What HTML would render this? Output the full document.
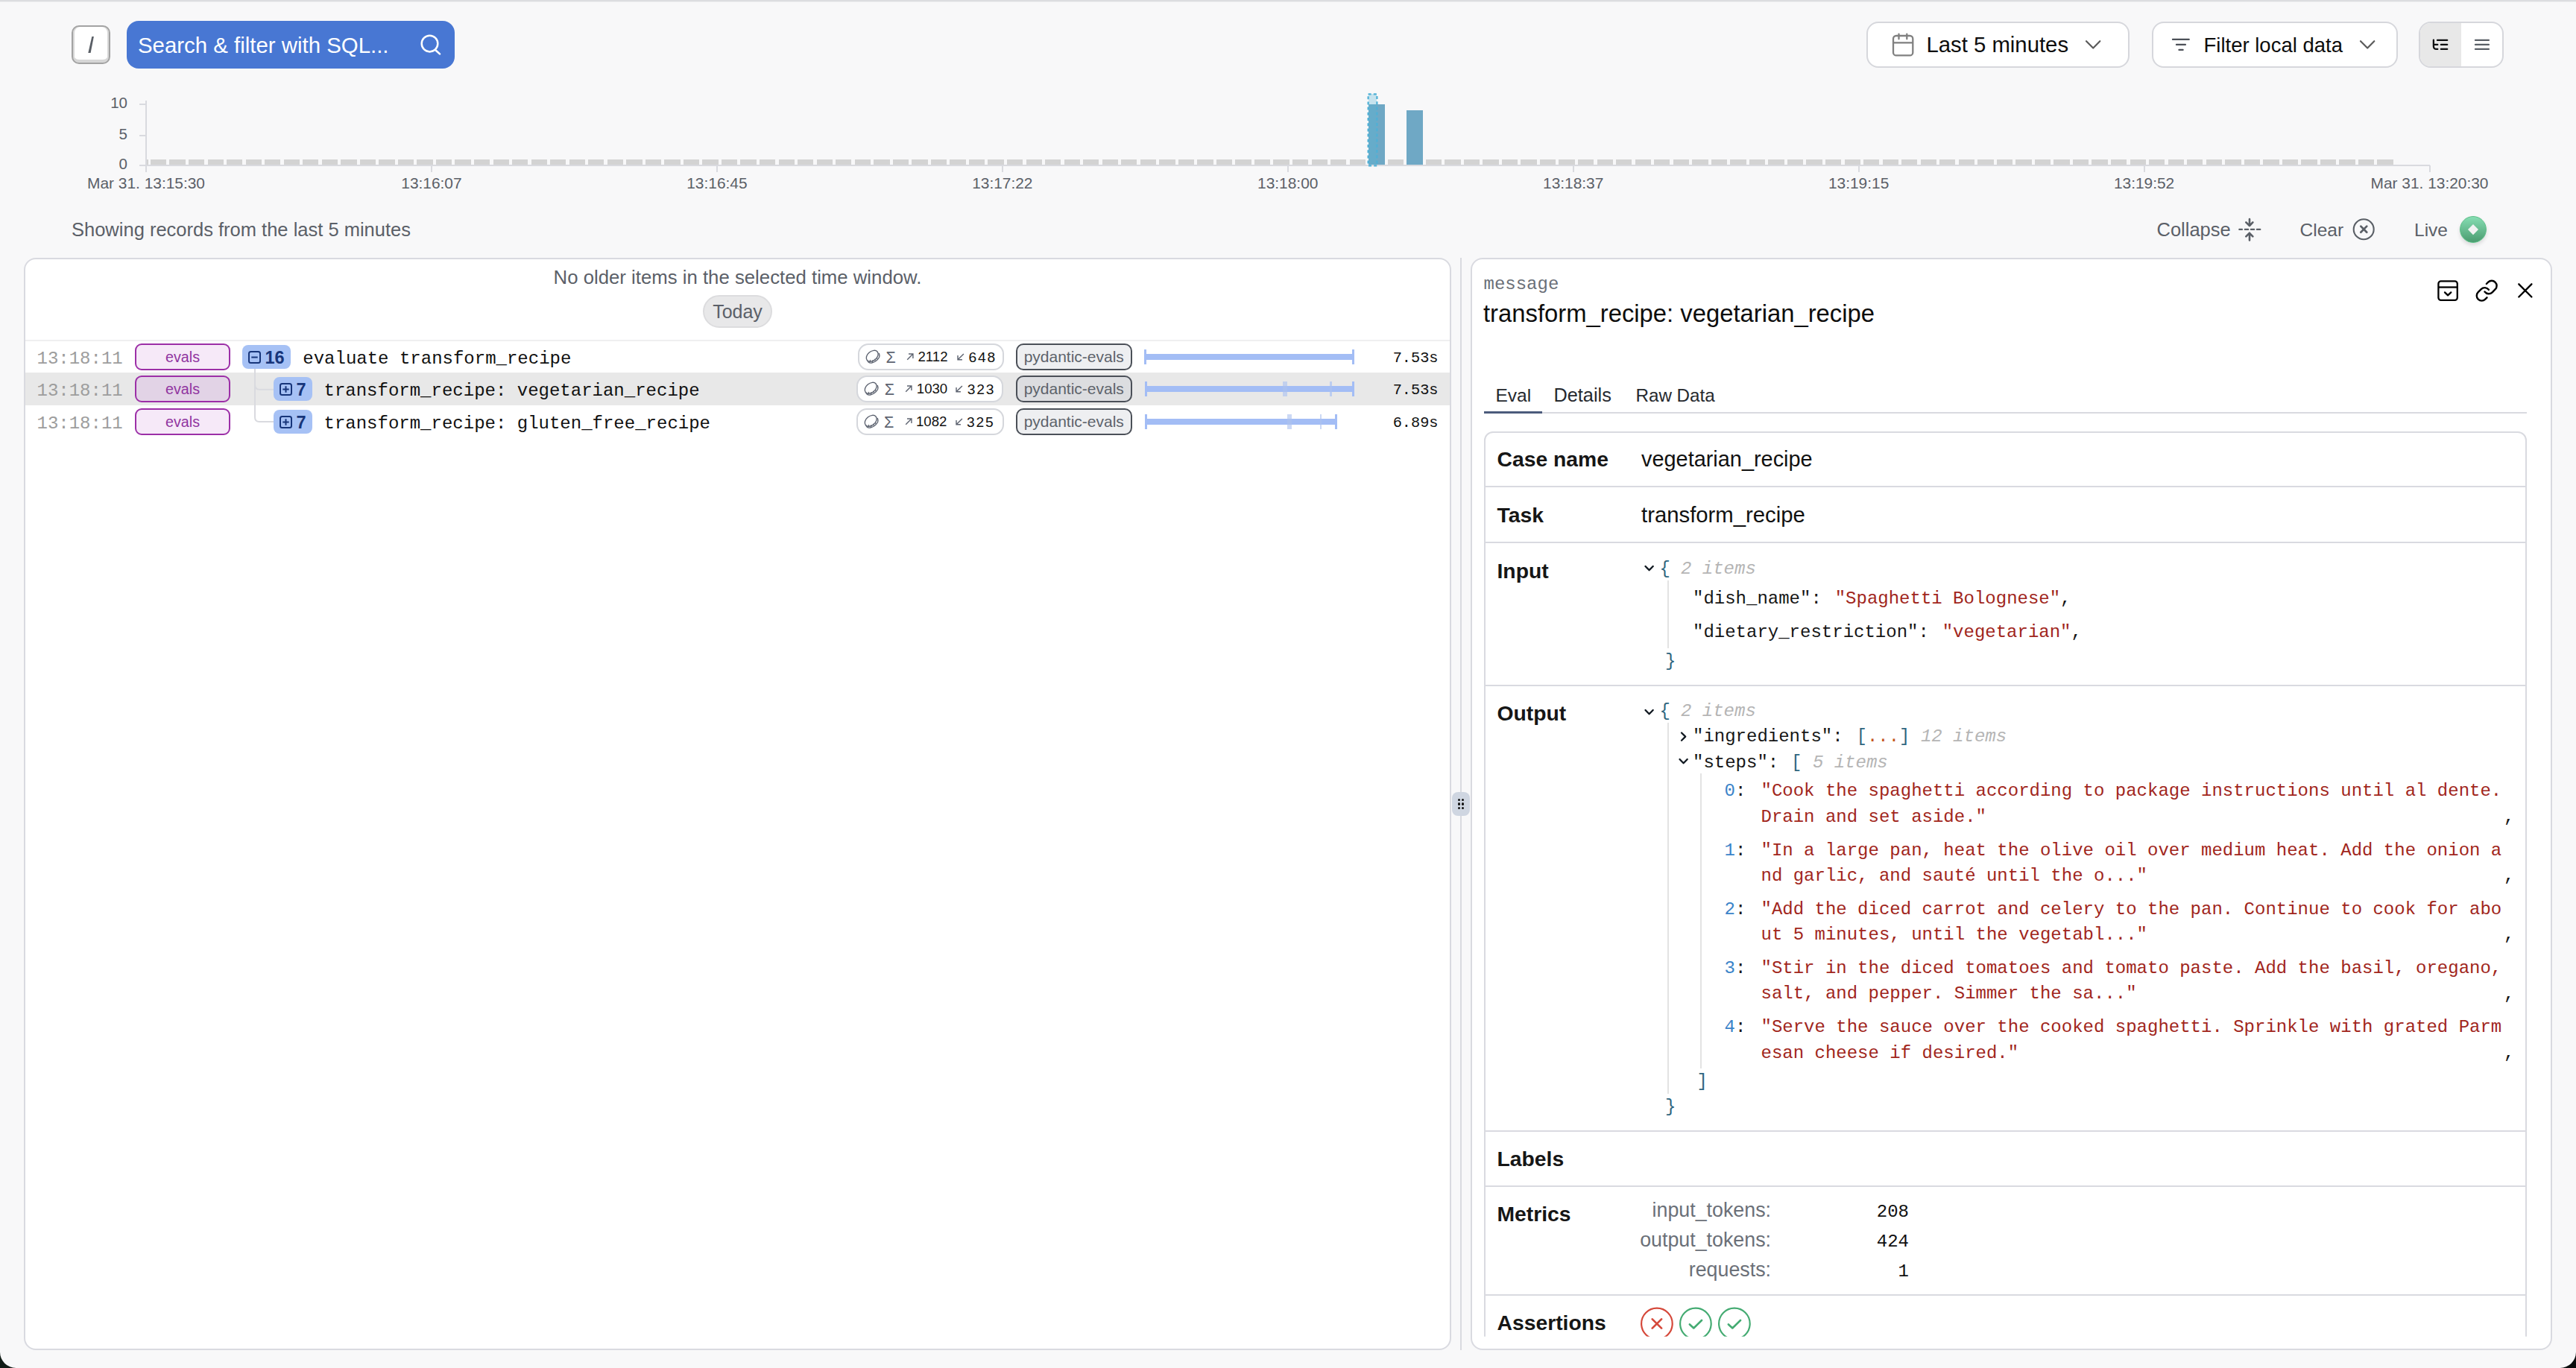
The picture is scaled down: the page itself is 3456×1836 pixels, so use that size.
<!DOCTYPE html><html><head><meta charset="utf-8"><title>Logfire</title><style>
html,body{margin:0;padding:0;}
body{width:3456px;height:1836px;position:relative;overflow:hidden;background:linear-gradient(90deg,#111c17,#0a0d0d);}
.t{position:absolute;white-space:pre;}
.b{position:absolute;box-sizing:border-box;}
@media (min-width:1700px) and (max-width:1760px){html{zoom:0.5;}}
</style></head><body>
<div class="b" style="left:0.00px;top:0.00px;width:3456.00px;height:1836.00px;background:#f8f8f9;border-radius:0 0 21.5px 21.5px;"></div>
<div class="b" style="left:0.00px;top:0.00px;width:3456.00px;height:2.00px;background:#dcdde0;"></div>
<div class="b" style="left:0.00px;top:2.00px;width:3456.00px;height:1.00px;background:#eeeff1;"></div>
<div class="b" style="left:96.00px;top:34.00px;width:52.00px;height:52.00px;background:#fff;border:2px solid #a3a3a3;border-radius:10px;box-shadow:inset 2px 0 0 #d8d8d8,inset -2px 0 0 #d8d8d8,inset 0 -4px 0 #d6d6d6;"></div>
<svg class="b" style="left:110px;top:45px;" width="24" height="30" viewBox="0 0 24 30" fill="none"><path d="M13.3 4 L15.9 4 L11.6 26 L8.3 26 Z" fill="#5a5f66"/></svg>
<div class="b" style="left:170.00px;top:28.00px;width:440.00px;height:64.00px;background:#4877d3;border-radius:16px;"></div>
<div class="t" style="top:45.86px;font:400 29.4px/29.4px 'Liberation Sans', sans-serif;color:#ffffff;left:185.00px;">Search &amp; filter with SQL...</div>
<svg class="b" style="left:560px;top:42px;" width="36" height="36" viewBox="0 0 36 36" fill="none"><circle cx="16.5" cy="16.6" r="10.8" stroke="#fff" stroke-width="2.5"/><path d="M24.3 25.2 L30 30.4" stroke="#fff" stroke-width="2.6" stroke-linecap="round"/></svg>
<div class="b" style="left:2504.00px;top:29.00px;width:353.00px;height:62.00px;background:#fff;border:2px solid #d6d7dc;border-radius:16px;"></div>
<svg class="b" style="left:2536px;top:42px;" width="34" height="36" viewBox="0 0 34 36" fill="none"><rect x="4" y="6" width="26.3" height="26.4" rx="4" stroke="#808080" stroke-width="2.3"/><path d="M4 15.35 H30.3" stroke="#808080" stroke-width="2.3"/><path d="M11.5 3.7 V10.3 M22.3 3.7 V10.3" stroke="#808080" stroke-width="2.3" stroke-linecap="round"/></svg>
<div class="t" style="top:45.19px;font:400 29.3px/29.3px 'Liberation Sans', sans-serif;color:#0d0d0d;left:2584.50px;">Last 5 minutes</div>
<svg class="b" style="left:2796px;top:50px;" width="24" height="20" viewBox="0 0 24 20" fill="none"><path d="M3 5.2 L12.2 14.5 L21.3 5.2" stroke="#5a5a5a" stroke-width="2.2" stroke-linecap="round" stroke-linejoin="round"/></svg>
<div class="b" style="left:2887.00px;top:29.00px;width:330.00px;height:62.00px;background:#fff;border:2px solid #d6d7dc;border-radius:16px;"></div>
<svg class="b" style="left:2910px;top:46px;" width="32" height="26" viewBox="0 0 32 26" fill="none"><path d="M4.9 6.9 H26.8 M9.9 13.9 H22 M13.4 20.9 H18.7" stroke="#4c5058" stroke-width="2.1" stroke-linecap="round"/></svg>
<div class="t" style="top:46.72px;font:400 27.5px/27.5px 'Liberation Sans', sans-serif;color:#0d0d0d;left:2956.50px;">Filter local data</div>
<svg class="b" style="left:3164px;top:50px;" width="24" height="20" viewBox="0 0 24 20" fill="none"><path d="M3 5.2 L12.2 14.5 L21.3 5.2" stroke="#5a5a5a" stroke-width="2.2" stroke-linecap="round" stroke-linejoin="round"/></svg>
<div class="b" style="left:3244.50px;top:29.00px;width:114.50px;height:62.00px;background:#fff;border:2px solid #d6d7dc;border-radius:16px;overflow:hidden;"></div>
<div class="b" style="left:3246.50px;top:31.00px;width:55.50px;height:58.00px;background:#e8e8e8;border-radius:14px 0 0 14px;"></div>
<svg class="b" style="left:3258px;top:46px;" width="32" height="28" viewBox="0 0 32 28" fill="none"><path d="M6.9 7.7 V15.9 Q6.9 19.9 10.9 19.9 H12.3 M7 13.9 H12.3 M16.9 13.9 H25.2 M16.9 19.9 H25.2 M12 7.9 H25.2" stroke="#0e0f11" stroke-width="2.3" stroke-linecap="round" stroke-linejoin="round"/></svg>
<svg class="b" style="left:3314px;top:46px;" width="32" height="28" viewBox="0 0 32 28" fill="none"><path d="M7 7.9 H24.9 M7 13.9 H24.9 M7 19.9 H24.9" stroke="#5a5f66" stroke-width="2.3" stroke-linecap="round"/></svg>
<div class="b" style="left:195.00px;top:135.00px;width:2.00px;height:96.00px;background:#d9dadf;"></div>
<div class="b" style="left:187.00px;top:139.00px;width:9.00px;height:2.00px;background:#d9dadf;"></div>
<div class="b" style="left:187.00px;top:181.00px;width:9.00px;height:2.00px;background:#d9dadf;"></div>
<div class="b" style="left:187.00px;top:221.00px;width:3073.00px;height:2.00px;background:#d9dadf;"></div>
<div class="b" style="left:195.00px;top:222.00px;width:2.00px;height:8.50px;background:#d9dadf;"></div>
<div class="b" style="left:577.94px;top:222.00px;width:2.00px;height:8.50px;background:#d9dadf;"></div>
<div class="b" style="left:960.88px;top:222.00px;width:2.00px;height:8.50px;background:#d9dadf;"></div>
<div class="b" style="left:1343.82px;top:222.00px;width:2.00px;height:8.50px;background:#d9dadf;"></div>
<div class="b" style="left:1726.76px;top:222.00px;width:2.00px;height:8.50px;background:#d9dadf;"></div>
<div class="b" style="left:2109.70px;top:222.00px;width:2.00px;height:8.50px;background:#d9dadf;"></div>
<div class="b" style="left:2492.64px;top:222.00px;width:2.00px;height:8.50px;background:#d9dadf;"></div>
<div class="b" style="left:2875.58px;top:222.00px;width:2.00px;height:8.50px;background:#d9dadf;"></div>
<div class="b" style="left:3258.52px;top:222.00px;width:2.00px;height:8.50px;background:#d9dadf;"></div>
<div class="t" style="top:127.64px;font:400 20.5px/20.5px 'Liberation Sans', sans-serif;color:#5b6068;right:3285.00px;text-align:right;">10</div>
<div class="t" style="top:169.64px;font:400 20.5px/20.5px 'Liberation Sans', sans-serif;color:#5b6068;right:3285.00px;text-align:right;">5</div>
<div class="t" style="top:209.64px;font:400 20.5px/20.5px 'Liberation Sans', sans-serif;color:#5b6068;right:3285.00px;text-align:right;">0</div>
<div class="t" style="top:236.05px;font:400 20.9px/20.9px 'Liberation Sans', sans-serif;color:#5b6068;left:-804.00px;width:2000px;text-align:center;">Mar 31. 13:15:30</div>
<div class="t" style="top:236.05px;font:400 20.9px/20.9px 'Liberation Sans', sans-serif;color:#5b6068;left:-421.06px;width:2000px;text-align:center;">13:16:07</div>
<div class="t" style="top:236.05px;font:400 20.9px/20.9px 'Liberation Sans', sans-serif;color:#5b6068;left:-38.12px;width:2000px;text-align:center;">13:16:45</div>
<div class="t" style="top:236.05px;font:400 20.9px/20.9px 'Liberation Sans', sans-serif;color:#5b6068;left:344.82px;width:2000px;text-align:center;">13:17:22</div>
<div class="t" style="top:236.05px;font:400 20.9px/20.9px 'Liberation Sans', sans-serif;color:#5b6068;left:727.76px;width:2000px;text-align:center;">13:18:00</div>
<div class="t" style="top:236.05px;font:400 20.9px/20.9px 'Liberation Sans', sans-serif;color:#5b6068;left:1110.70px;width:2000px;text-align:center;">13:18:37</div>
<div class="t" style="top:236.05px;font:400 20.9px/20.9px 'Liberation Sans', sans-serif;color:#5b6068;left:1493.64px;width:2000px;text-align:center;">13:19:15</div>
<div class="t" style="top:236.05px;font:400 20.9px/20.9px 'Liberation Sans', sans-serif;color:#5b6068;left:1876.58px;width:2000px;text-align:center;">13:19:52</div>
<div class="t" style="top:236.05px;font:400 20.9px/20.9px 'Liberation Sans', sans-serif;color:#5b6068;left:2259.52px;width:2000px;text-align:center;">Mar 31. 13:20:30</div>
<div class="b" style="left:197.00px;top:214.00px;width:2.20px;height:7.00px;background:#d3d3d3;"></div>
<div class="b" style="left:201.90px;top:214.00px;width:21.30px;height:7.00px;background:#d3d3d3;"></div>
<div class="b" style="left:227.44px;top:214.00px;width:21.30px;height:7.00px;background:#d3d3d3;"></div>
<div class="b" style="left:252.97px;top:214.00px;width:21.30px;height:7.00px;background:#d3d3d3;"></div>
<div class="b" style="left:278.50px;top:214.00px;width:21.30px;height:7.00px;background:#d3d3d3;"></div>
<div class="b" style="left:304.04px;top:214.00px;width:21.30px;height:7.00px;background:#d3d3d3;"></div>
<div class="b" style="left:329.57px;top:214.00px;width:21.30px;height:7.00px;background:#d3d3d3;"></div>
<div class="b" style="left:355.11px;top:214.00px;width:21.30px;height:7.00px;background:#d3d3d3;"></div>
<div class="b" style="left:380.64px;top:214.00px;width:21.30px;height:7.00px;background:#d3d3d3;"></div>
<div class="b" style="left:406.18px;top:214.00px;width:21.30px;height:7.00px;background:#d3d3d3;"></div>
<div class="b" style="left:431.72px;top:214.00px;width:21.30px;height:7.00px;background:#d3d3d3;"></div>
<div class="b" style="left:457.25px;top:214.00px;width:21.30px;height:7.00px;background:#d3d3d3;"></div>
<div class="b" style="left:482.78px;top:214.00px;width:21.30px;height:7.00px;background:#d3d3d3;"></div>
<div class="b" style="left:508.32px;top:214.00px;width:21.30px;height:7.00px;background:#d3d3d3;"></div>
<div class="b" style="left:533.86px;top:214.00px;width:21.30px;height:7.00px;background:#d3d3d3;"></div>
<div class="b" style="left:559.39px;top:214.00px;width:21.30px;height:7.00px;background:#d3d3d3;"></div>
<div class="b" style="left:584.92px;top:214.00px;width:21.30px;height:7.00px;background:#d3d3d3;"></div>
<div class="b" style="left:610.46px;top:214.00px;width:21.30px;height:7.00px;background:#d3d3d3;"></div>
<div class="b" style="left:636.00px;top:214.00px;width:21.30px;height:7.00px;background:#d3d3d3;"></div>
<div class="b" style="left:661.53px;top:214.00px;width:21.30px;height:7.00px;background:#d3d3d3;"></div>
<div class="b" style="left:687.07px;top:214.00px;width:21.30px;height:7.00px;background:#d3d3d3;"></div>
<div class="b" style="left:712.60px;top:214.00px;width:21.30px;height:7.00px;background:#d3d3d3;"></div>
<div class="b" style="left:738.13px;top:214.00px;width:21.30px;height:7.00px;background:#d3d3d3;"></div>
<div class="b" style="left:763.67px;top:214.00px;width:21.30px;height:7.00px;background:#d3d3d3;"></div>
<div class="b" style="left:789.20px;top:214.00px;width:21.30px;height:7.00px;background:#d3d3d3;"></div>
<div class="b" style="left:814.74px;top:214.00px;width:21.30px;height:7.00px;background:#d3d3d3;"></div>
<div class="b" style="left:840.27px;top:214.00px;width:21.30px;height:7.00px;background:#d3d3d3;"></div>
<div class="b" style="left:865.81px;top:214.00px;width:21.30px;height:7.00px;background:#d3d3d3;"></div>
<div class="b" style="left:891.35px;top:214.00px;width:21.30px;height:7.00px;background:#d3d3d3;"></div>
<div class="b" style="left:916.88px;top:214.00px;width:21.30px;height:7.00px;background:#d3d3d3;"></div>
<div class="b" style="left:942.41px;top:214.00px;width:21.30px;height:7.00px;background:#d3d3d3;"></div>
<div class="b" style="left:967.95px;top:214.00px;width:21.30px;height:7.00px;background:#d3d3d3;"></div>
<div class="b" style="left:993.49px;top:214.00px;width:21.30px;height:7.00px;background:#d3d3d3;"></div>
<div class="b" style="left:1019.02px;top:214.00px;width:21.30px;height:7.00px;background:#d3d3d3;"></div>
<div class="b" style="left:1044.56px;top:214.00px;width:21.30px;height:7.00px;background:#d3d3d3;"></div>
<div class="b" style="left:1070.09px;top:214.00px;width:21.30px;height:7.00px;background:#d3d3d3;"></div>
<div class="b" style="left:1095.62px;top:214.00px;width:21.30px;height:7.00px;background:#d3d3d3;"></div>
<div class="b" style="left:1121.16px;top:214.00px;width:21.30px;height:7.00px;background:#d3d3d3;"></div>
<div class="b" style="left:1146.69px;top:214.00px;width:21.30px;height:7.00px;background:#d3d3d3;"></div>
<div class="b" style="left:1172.23px;top:214.00px;width:21.30px;height:7.00px;background:#d3d3d3;"></div>
<div class="b" style="left:1197.77px;top:214.00px;width:21.30px;height:7.00px;background:#d3d3d3;"></div>
<div class="b" style="left:1223.30px;top:214.00px;width:21.30px;height:7.00px;background:#d3d3d3;"></div>
<div class="b" style="left:1248.84px;top:214.00px;width:21.30px;height:7.00px;background:#d3d3d3;"></div>
<div class="b" style="left:1274.37px;top:214.00px;width:21.30px;height:7.00px;background:#d3d3d3;"></div>
<div class="b" style="left:1299.91px;top:214.00px;width:21.30px;height:7.00px;background:#d3d3d3;"></div>
<div class="b" style="left:1325.44px;top:214.00px;width:21.30px;height:7.00px;background:#d3d3d3;"></div>
<div class="b" style="left:1350.98px;top:214.00px;width:21.30px;height:7.00px;background:#d3d3d3;"></div>
<div class="b" style="left:1376.51px;top:214.00px;width:21.30px;height:7.00px;background:#d3d3d3;"></div>
<div class="b" style="left:1402.05px;top:214.00px;width:21.30px;height:7.00px;background:#d3d3d3;"></div>
<div class="b" style="left:1427.58px;top:214.00px;width:21.30px;height:7.00px;background:#d3d3d3;"></div>
<div class="b" style="left:1453.12px;top:214.00px;width:21.30px;height:7.00px;background:#d3d3d3;"></div>
<div class="b" style="left:1478.65px;top:214.00px;width:21.30px;height:7.00px;background:#d3d3d3;"></div>
<div class="b" style="left:1504.19px;top:214.00px;width:21.30px;height:7.00px;background:#d3d3d3;"></div>
<div class="b" style="left:1529.72px;top:214.00px;width:21.30px;height:7.00px;background:#d3d3d3;"></div>
<div class="b" style="left:1555.26px;top:214.00px;width:21.30px;height:7.00px;background:#d3d3d3;"></div>
<div class="b" style="left:1580.79px;top:214.00px;width:21.30px;height:7.00px;background:#d3d3d3;"></div>
<div class="b" style="left:1606.33px;top:214.00px;width:21.30px;height:7.00px;background:#d3d3d3;"></div>
<div class="b" style="left:1631.86px;top:214.00px;width:21.30px;height:7.00px;background:#d3d3d3;"></div>
<div class="b" style="left:1657.40px;top:214.00px;width:21.30px;height:7.00px;background:#d3d3d3;"></div>
<div class="b" style="left:1682.93px;top:214.00px;width:21.30px;height:7.00px;background:#d3d3d3;"></div>
<div class="b" style="left:1708.47px;top:214.00px;width:21.30px;height:7.00px;background:#d3d3d3;"></div>
<div class="b" style="left:1734.00px;top:214.00px;width:21.30px;height:7.00px;background:#d3d3d3;"></div>
<div class="b" style="left:1759.54px;top:214.00px;width:21.30px;height:7.00px;background:#d3d3d3;"></div>
<div class="b" style="left:1785.07px;top:214.00px;width:21.30px;height:7.00px;background:#d3d3d3;"></div>
<div class="b" style="left:1810.61px;top:214.00px;width:21.30px;height:7.00px;background:#d3d3d3;"></div>
<div class="b" style="left:1861.68px;top:214.00px;width:21.30px;height:7.00px;background:#d3d3d3;"></div>
<div class="b" style="left:1912.75px;top:214.00px;width:21.30px;height:7.00px;background:#d3d3d3;"></div>
<div class="b" style="left:1938.28px;top:214.00px;width:21.30px;height:7.00px;background:#d3d3d3;"></div>
<div class="b" style="left:1963.82px;top:214.00px;width:21.30px;height:7.00px;background:#d3d3d3;"></div>
<div class="b" style="left:1989.35px;top:214.00px;width:21.30px;height:7.00px;background:#d3d3d3;"></div>
<div class="b" style="left:2014.88px;top:214.00px;width:21.30px;height:7.00px;background:#d3d3d3;"></div>
<div class="b" style="left:2040.42px;top:214.00px;width:21.30px;height:7.00px;background:#d3d3d3;"></div>
<div class="b" style="left:2065.95px;top:214.00px;width:21.30px;height:7.00px;background:#d3d3d3;"></div>
<div class="b" style="left:2091.49px;top:214.00px;width:21.30px;height:7.00px;background:#d3d3d3;"></div>
<div class="b" style="left:2117.03px;top:214.00px;width:21.30px;height:7.00px;background:#d3d3d3;"></div>
<div class="b" style="left:2142.56px;top:214.00px;width:21.30px;height:7.00px;background:#d3d3d3;"></div>
<div class="b" style="left:2168.09px;top:214.00px;width:21.30px;height:7.00px;background:#d3d3d3;"></div>
<div class="b" style="left:2193.63px;top:214.00px;width:21.30px;height:7.00px;background:#d3d3d3;"></div>
<div class="b" style="left:2219.16px;top:214.00px;width:21.30px;height:7.00px;background:#d3d3d3;"></div>
<div class="b" style="left:2244.70px;top:214.00px;width:21.30px;height:7.00px;background:#d3d3d3;"></div>
<div class="b" style="left:2270.24px;top:214.00px;width:21.30px;height:7.00px;background:#d3d3d3;"></div>
<div class="b" style="left:2295.77px;top:214.00px;width:21.30px;height:7.00px;background:#d3d3d3;"></div>
<div class="b" style="left:2321.31px;top:214.00px;width:21.30px;height:7.00px;background:#d3d3d3;"></div>
<div class="b" style="left:2346.84px;top:214.00px;width:21.30px;height:7.00px;background:#d3d3d3;"></div>
<div class="b" style="left:2372.38px;top:214.00px;width:21.30px;height:7.00px;background:#d3d3d3;"></div>
<div class="b" style="left:2397.91px;top:214.00px;width:21.30px;height:7.00px;background:#d3d3d3;"></div>
<div class="b" style="left:2423.45px;top:214.00px;width:21.30px;height:7.00px;background:#d3d3d3;"></div>
<div class="b" style="left:2448.98px;top:214.00px;width:21.30px;height:7.00px;background:#d3d3d3;"></div>
<div class="b" style="left:2474.52px;top:214.00px;width:21.30px;height:7.00px;background:#d3d3d3;"></div>
<div class="b" style="left:2500.05px;top:214.00px;width:21.30px;height:7.00px;background:#d3d3d3;"></div>
<div class="b" style="left:2525.59px;top:214.00px;width:21.30px;height:7.00px;background:#d3d3d3;"></div>
<div class="b" style="left:2551.12px;top:214.00px;width:21.30px;height:7.00px;background:#d3d3d3;"></div>
<div class="b" style="left:2576.66px;top:214.00px;width:21.30px;height:7.00px;background:#d3d3d3;"></div>
<div class="b" style="left:2602.19px;top:214.00px;width:21.30px;height:7.00px;background:#d3d3d3;"></div>
<div class="b" style="left:2627.72px;top:214.00px;width:21.30px;height:7.00px;background:#d3d3d3;"></div>
<div class="b" style="left:2653.26px;top:214.00px;width:21.30px;height:7.00px;background:#d3d3d3;"></div>
<div class="b" style="left:2678.80px;top:214.00px;width:21.30px;height:7.00px;background:#d3d3d3;"></div>
<div class="b" style="left:2704.33px;top:214.00px;width:21.30px;height:7.00px;background:#d3d3d3;"></div>
<div class="b" style="left:2729.87px;top:214.00px;width:21.30px;height:7.00px;background:#d3d3d3;"></div>
<div class="b" style="left:2755.40px;top:214.00px;width:21.30px;height:7.00px;background:#d3d3d3;"></div>
<div class="b" style="left:2780.93px;top:214.00px;width:21.30px;height:7.00px;background:#d3d3d3;"></div>
<div class="b" style="left:2806.47px;top:214.00px;width:21.30px;height:7.00px;background:#d3d3d3;"></div>
<div class="b" style="left:2832.01px;top:214.00px;width:21.30px;height:7.00px;background:#d3d3d3;"></div>
<div class="b" style="left:2857.54px;top:214.00px;width:21.30px;height:7.00px;background:#d3d3d3;"></div>
<div class="b" style="left:2883.08px;top:214.00px;width:21.30px;height:7.00px;background:#d3d3d3;"></div>
<div class="b" style="left:2908.61px;top:214.00px;width:21.30px;height:7.00px;background:#d3d3d3;"></div>
<div class="b" style="left:2934.14px;top:214.00px;width:21.30px;height:7.00px;background:#d3d3d3;"></div>
<div class="b" style="left:2959.68px;top:214.00px;width:21.30px;height:7.00px;background:#d3d3d3;"></div>
<div class="b" style="left:2985.22px;top:214.00px;width:21.30px;height:7.00px;background:#d3d3d3;"></div>
<div class="b" style="left:3010.75px;top:214.00px;width:21.30px;height:7.00px;background:#d3d3d3;"></div>
<div class="b" style="left:3036.29px;top:214.00px;width:21.30px;height:7.00px;background:#d3d3d3;"></div>
<div class="b" style="left:3061.82px;top:214.00px;width:21.30px;height:7.00px;background:#d3d3d3;"></div>
<div class="b" style="left:3087.36px;top:214.00px;width:21.30px;height:7.00px;background:#d3d3d3;"></div>
<div class="b" style="left:3112.89px;top:214.00px;width:21.30px;height:7.00px;background:#d3d3d3;"></div>
<div class="b" style="left:3138.43px;top:214.00px;width:21.30px;height:7.00px;background:#d3d3d3;"></div>
<div class="b" style="left:3163.96px;top:214.00px;width:21.30px;height:7.00px;background:#d3d3d3;"></div>
<div class="b" style="left:3189.49px;top:214.00px;width:21.30px;height:7.00px;background:#d3d3d3;"></div>
<div class="b" style="left:1836.10px;top:140.20px;width:21.50px;height:80.80px;background:#6fa8c5;"></div>
<div class="b" style="left:1887.00px;top:148.10px;width:21.80px;height:72.90px;background:#6fa8c5;"></div>
<div class="b" style="left:1835.60px;top:126.40px;width:11.80px;height:13.80px;background:#c6e3ee;"></div>
<div class="b" style="left:1835.60px;top:140.20px;width:11.80px;height:81.00px;background:#66acca;"></div>
<svg class="b" style="left:1834px;top:125px;" width="15" height="99" viewBox="0 0 15 99" fill="none"><rect x="1.6" y="1.4" width="11.8" height="96" stroke="#4eb0d6" stroke-width="2.2" stroke-dasharray="4 3.2"/></svg>
<div class="t" style="top:296.41px;font:400 25.5px/25.5px 'Liberation Sans', sans-serif;color:#5b6068;left:96.00px;">Showing records from the last 5 minutes</div>
<div class="t" style="top:296.41px;font:400 25.5px/25.5px 'Liberation Sans', sans-serif;color:#5b6068;left:2893.50px;">Collapse</div>
<svg class="b" style="left:3000px;top:290px;" width="36" height="36" viewBox="0 0 36 36" fill="none"><path d="M18 4 V13 M13.3 8.4 L18 13 L22.4 8.4 M18 32.5 V22.8 M13.3 27.4 L18 22.8 L22.4 27.4" stroke="#5a5f66" stroke-width="2.6" stroke-linecap="round" stroke-linejoin="round"/><path d="M4.3 17.9 H8 M11.8 17.9 H16.2 M19.9 17.9 H24.2 M27.9 17.9 H32.3" stroke="#5a5f66" stroke-width="2.2" stroke-linecap="round"/></svg>
<div class="t" style="top:297.26px;font:400 24.5px/24.5px 'Liberation Sans', sans-serif;color:#5b6068;left:3085.50px;">Clear</div>
<svg class="b" style="left:3153px;top:290px;" width="36" height="36" viewBox="0 0 36 36" fill="none"><circle cx="18.2" cy="17.7" r="13.5" stroke="#5a5f66" stroke-width="2.1"/><path d="M14.3 13.6 L22.3 21.8 M22.3 13.6 L14.3 21.8" stroke="#5a5f66" stroke-width="2.7" stroke-linecap="round"/></svg>
<div class="t" style="top:297.26px;font:400 24.5px/24.5px 'Liberation Sans', sans-serif;color:#5b6068;left:3239.00px;">Live</div>
<div class="b" style="left:3300px;top:290px;width:36.2px;height:36.2px;border-radius:50%;background:linear-gradient(#86ddb3,#4b9c70);border:1.5px solid #5cbf87;box-shadow:0 3px 5px rgba(0,0,0,0.12);"></div>
<svg class="b" style="left:3306px;top:296px;" width="24" height="24" viewBox="0 0 24 24" fill="none"><path d="M12 5 L19 12.1 L12 19.2 L5 12.1 Z" fill="#f2f2f2"/></svg>
<div class="b" style="left:32.00px;top:346.00px;width:1915.00px;height:1466.00px;background:#fff;border:2px solid #d9dae0;border-radius:16px;"></div>
<div class="t" style="top:360.45px;font:400 25.75px/25.75px 'Liberation Sans', sans-serif;color:#5b6068;left:-10.50px;width:2000px;text-align:center;">No older items in the selected time window.</div>
<div class="b" style="left:942.50px;top:396.00px;width:93.50px;height:43.50px;background:#e8e8e9;border:2px solid #dcdcde;border-radius:22px;"></div>
<div class="t" style="top:406.33px;font:400 25px/25px 'Liberation Sans', sans-serif;color:#5b6068;left:-10.50px;width:2000px;text-align:center;">Today</div>
<div class="b" style="left:34.00px;top:456.00px;width:1911.00px;height:2.00px;background:#efeff0;"></div>
<div class="b" style="left:34.00px;top:500.30px;width:1911.00px;height:43.50px;background:#e8e8e8;"></div>
<svg class="b" style="left:338px;top:494px;" width="32" height="76" viewBox="0 0 32 76" fill="none"><path d="M4 0 V22 Q4 28.8 10 28.8 H30 M4 22 V66 Q4 72 10 72 H30" stroke="#d9dadf" stroke-width="2"/></svg>
<div class="t" style="top:470.36px;font:400 24px/24px 'Liberation Mono', monospace;color:#9d9d9d;left:49.50px;">13:18:11</div>
<div class="b" style="left:181.00px;top:461.00px;width:128.00px;height:36.00px;background:#f6e9f8;border:2px solid #9c2fa7;border-radius:9px;"></div>
<div class="t" style="top:470.32px;font:400 19.7px/19.7px 'Liberation Sans', sans-serif;color:#9034a0;left:-755.00px;width:2000px;text-align:center;">evals</div>
<div class="b" style="left:325.00px;top:463.00px;width:65.00px;height:32.00px;background:#a6c1f5;border-radius:8px;"></div>
<svg class="b" style="left:332.5px;top:470.5px;" width="17" height="17" viewBox="0 0 17 17" fill="none"><rect x="1" y="1" width="15" height="15" rx="2.5" stroke="#17357a" stroke-width="2"/><path d="M4.3 8.5 H12.7" stroke="#17357a" stroke-width="2"/></svg>
<div class="t" style="top:468.70px;font:700 23.5px/23.5px 'Liberation Sans', sans-serif;color:#17357a;left:355.50px;">16</div>
<div class="t" style="top:470.11px;font:400 24px/24px 'Liberation Mono', monospace;color:#111;left:406.30px;">evaluate transform_recipe</div>
<div class="b" style="left:1151.00px;top:461.00px;width:196.00px;height:36.00px;background:#fff;border:2px solid #d5d7dc;border-radius:14px;"></div>
<svg class="b" style="left:1160px;top:468px;" width="22" height="22" viewBox="0 0 22 22" fill="none"><ellipse cx="10.2" cy="9.8" rx="9" ry="6.2" transform="rotate(-40 10.2 9.8)" stroke="#5d6370" stroke-width="1.4"/><path d="M3.6 15.4 Q5 19.8 9.5 19 Q16 17.6 19.6 11.5 Q20.6 9.5 19.2 6" stroke="#5d6370" stroke-width="1.4"/><path d="M6.6 17.7 L7.8 15 M10.5 18.3 L11.1 15.2 M14 16.6 L14 13.6 M16.9 14 L16.3 11.2" stroke="#5d6370" stroke-width="1.1"/></svg>
<div class="t" style="top:469.80px;font:400 21.5px/21.5px 'Liberation Sans', sans-serif;color:#5d6370;left:1188.50px;">Σ</div>
<svg class="b" style="left:1214px;top:473px;" width="12" height="12" viewBox="0 0 12 12" fill="none"><path d="M3.2 9.8 L10.9 2 M5 2 H10.9 V7.9" stroke="#5d6370" stroke-width="1.4"/></svg>
<div class="t" style="top:470.05px;font:400 18.6px/18.6px 'Liberation Sans', sans-serif;color:#111;left:1231.50px;">2112</div>
<svg class="b" style="left:1282px;top:473px;" width="12" height="12" viewBox="0 0 12 12" fill="none"><path d="M10.9 2 L3 9.8 M3 3.9 V9.8 H8.9" stroke="#5d6370" stroke-width="1.4"/></svg>
<div class="t" style="top:469.54px;font:400 19.2px/19.2px 'Liberation Sans', sans-serif;color:#111;letter-spacing:1.8px;left:1299.50px;">648</div>
<div class="b" style="left:1363.00px;top:461.00px;width:155.50px;height:36.00px;background:#eeeff1;border:2px solid #4b5058;border-radius:10px;"></div>
<div class="t" style="top:468.22px;font:400 21px/21px 'Liberation Sans', sans-serif;color:#5d636b;left:440.75px;width:2000px;text-align:center;">pydantic-evals</div>
<div class="b" style="left:1535.00px;top:475.00px;width:282.00px;height:8.00px;background:#a3bdf5;"></div>
<div class="b" style="left:1535.00px;top:469.00px;width:3.00px;height:20.00px;background:#a3bdf5;"></div>
<div class="b" style="left:1814.00px;top:469.00px;width:3.00px;height:20.00px;background:#a3bdf5;"></div>
<div class="t" style="top:470.65px;font:400 20.3px/20.3px 'Liberation Mono', monospace;color:#111;right:1526.50px;text-align:right;">7.53s</div>
<div class="t" style="top:513.36px;font:400 24px/24px 'Liberation Mono', monospace;color:#9d9d9d;left:49.50px;">13:18:11</div>
<div class="b" style="left:181.00px;top:504.00px;width:128.00px;height:36.00px;background:#e2d3e6;border:2px solid #9c2fa7;border-radius:9px;"></div>
<div class="t" style="top:513.32px;font:400 19.7px/19.7px 'Liberation Sans', sans-serif;color:#9034a0;left:-755.00px;width:2000px;text-align:center;">evals</div>
<div class="b" style="left:367.00px;top:506.00px;width:52.00px;height:32.00px;background:#a6c1f5;border-radius:8px;"></div>
<svg class="b" style="left:374.5px;top:513.5px;" width="17" height="17" viewBox="0 0 17 17" fill="none"><rect x="1" y="1" width="15" height="15" rx="2.5" stroke="#17357a" stroke-width="2"/><path d="M4.3 8.5 H12.7 M8.5 4.3 V12.7" stroke="#17357a" stroke-width="2"/></svg>
<div class="t" style="top:511.70px;font:700 23.5px/23.5px 'Liberation Sans', sans-serif;color:#17357a;left:397.50px;">7</div>
<div class="t" style="top:513.11px;font:400 24px/24px 'Liberation Mono', monospace;color:#111;left:434.50px;">transform_recipe: vegetarian_recipe</div>
<div class="b" style="left:1149.30px;top:504.00px;width:196.70px;height:36.00px;background:#fff;border:2px solid #d5d7dc;border-radius:14px;"></div>
<svg class="b" style="left:1158.3px;top:511px;" width="22" height="22" viewBox="0 0 22 22" fill="none"><ellipse cx="10.2" cy="9.8" rx="9" ry="6.2" transform="rotate(-40 10.2 9.8)" stroke="#5d6370" stroke-width="1.4"/><path d="M3.6 15.4 Q5 19.8 9.5 19 Q16 17.6 19.6 11.5 Q20.6 9.5 19.2 6" stroke="#5d6370" stroke-width="1.4"/><path d="M6.6 17.7 L7.8 15 M10.5 18.3 L11.1 15.2 M14 16.6 L14 13.6 M16.9 14 L16.3 11.2" stroke="#5d6370" stroke-width="1.1"/></svg>
<div class="t" style="top:512.80px;font:400 21.5px/21.5px 'Liberation Sans', sans-serif;color:#5d6370;left:1186.80px;">Σ</div>
<svg class="b" style="left:1212.3px;top:516px;" width="12" height="12" viewBox="0 0 12 12" fill="none"><path d="M3.2 9.8 L10.9 2 M5 2 H10.9 V7.9" stroke="#5d6370" stroke-width="1.4"/></svg>
<div class="t" style="top:513.05px;font:400 18.6px/18.6px 'Liberation Sans', sans-serif;color:#111;left:1229.80px;">1030</div>
<svg class="b" style="left:1280.3px;top:516px;" width="12" height="12" viewBox="0 0 12 12" fill="none"><path d="M10.9 2 L3 9.8 M3 3.9 V9.8 H8.9" stroke="#5d6370" stroke-width="1.4"/></svg>
<div class="t" style="top:512.54px;font:400 19.2px/19.2px 'Liberation Sans', sans-serif;color:#111;letter-spacing:1.8px;left:1297.80px;">323</div>
<div class="b" style="left:1363.00px;top:504.00px;width:155.50px;height:36.00px;background:#dcdde0;border:2px solid #4b5058;border-radius:10px;"></div>
<div class="t" style="top:511.22px;font:400 21px/21px 'Liberation Sans', sans-serif;color:#5d636b;left:440.75px;width:2000px;text-align:center;">pydantic-evals</div>
<div class="b" style="left:1535.50px;top:518.00px;width:281.50px;height:8.00px;background:#a3bdf5;"></div>
<div class="b" style="left:1535.50px;top:512.00px;width:3.00px;height:20.00px;background:#a3bdf5;"></div>
<div class="b" style="left:1814.00px;top:512.00px;width:3.00px;height:20.00px;background:#a3bdf5;"></div>
<div class="b" style="left:1721.00px;top:512.00px;width:6.00px;height:20.00px;background:#c2d0ee;"></div>
<div class="b" style="left:1721.00px;top:518.00px;width:6.00px;height:8.00px;background:#a9c0f0;"></div>
<div class="b" style="left:1784.00px;top:512.00px;width:3.00px;height:20.00px;background:#bccdf0;"></div>
<div class="b" style="left:1784.00px;top:518.00px;width:3.00px;height:8.00px;background:#a9c0f0;"></div>
<div class="t" style="top:513.65px;font:400 20.3px/20.3px 'Liberation Mono', monospace;color:#111;right:1526.50px;text-align:right;">7.53s</div>
<div class="t" style="top:557.36px;font:400 24px/24px 'Liberation Mono', monospace;color:#9d9d9d;left:49.50px;">13:18:11</div>
<div class="b" style="left:181.00px;top:548.00px;width:128.00px;height:36.00px;background:#f6e9f8;border:2px solid #9c2fa7;border-radius:9px;"></div>
<div class="t" style="top:557.32px;font:400 19.7px/19.7px 'Liberation Sans', sans-serif;color:#9034a0;left:-755.00px;width:2000px;text-align:center;">evals</div>
<div class="b" style="left:367.00px;top:550.00px;width:52.00px;height:32.00px;background:#a6c1f5;border-radius:8px;"></div>
<svg class="b" style="left:374.5px;top:557.5px;" width="17" height="17" viewBox="0 0 17 17" fill="none"><rect x="1" y="1" width="15" height="15" rx="2.5" stroke="#17357a" stroke-width="2"/><path d="M4.3 8.5 H12.7 M8.5 4.3 V12.7" stroke="#17357a" stroke-width="2"/></svg>
<div class="t" style="top:555.70px;font:700 23.5px/23.5px 'Liberation Sans', sans-serif;color:#17357a;left:397.50px;">7</div>
<div class="t" style="top:557.11px;font:400 24px/24px 'Liberation Mono', monospace;color:#111;left:434.50px;">transform_recipe: gluten_free_recipe</div>
<div class="b" style="left:1148.50px;top:548.00px;width:198.50px;height:36.00px;background:#fff;border:2px solid #d5d7dc;border-radius:14px;"></div>
<svg class="b" style="left:1157.5px;top:555px;" width="22" height="22" viewBox="0 0 22 22" fill="none"><ellipse cx="10.2" cy="9.8" rx="9" ry="6.2" transform="rotate(-40 10.2 9.8)" stroke="#5d6370" stroke-width="1.4"/><path d="M3.6 15.4 Q5 19.8 9.5 19 Q16 17.6 19.6 11.5 Q20.6 9.5 19.2 6" stroke="#5d6370" stroke-width="1.4"/><path d="M6.6 17.7 L7.8 15 M10.5 18.3 L11.1 15.2 M14 16.6 L14 13.6 M16.9 14 L16.3 11.2" stroke="#5d6370" stroke-width="1.1"/></svg>
<div class="t" style="top:556.80px;font:400 21.5px/21.5px 'Liberation Sans', sans-serif;color:#5d6370;left:1186.00px;">Σ</div>
<svg class="b" style="left:1211.5px;top:560px;" width="12" height="12" viewBox="0 0 12 12" fill="none"><path d="M3.2 9.8 L10.9 2 M5 2 H10.9 V7.9" stroke="#5d6370" stroke-width="1.4"/></svg>
<div class="t" style="top:557.05px;font:400 18.6px/18.6px 'Liberation Sans', sans-serif;color:#111;left:1229.00px;">1082</div>
<svg class="b" style="left:1279.5px;top:560px;" width="12" height="12" viewBox="0 0 12 12" fill="none"><path d="M10.9 2 L3 9.8 M3 3.9 V9.8 H8.9" stroke="#5d6370" stroke-width="1.4"/></svg>
<div class="t" style="top:556.54px;font:400 19.2px/19.2px 'Liberation Sans', sans-serif;color:#111;letter-spacing:1.8px;left:1297.00px;">325</div>
<div class="b" style="left:1363.00px;top:548.00px;width:155.50px;height:36.00px;background:#eeeff1;border:2px solid #4b5058;border-radius:10px;"></div>
<div class="t" style="top:555.22px;font:400 21px/21px 'Liberation Sans', sans-serif;color:#5d636b;left:440.75px;width:2000px;text-align:center;">pydantic-evals</div>
<div class="b" style="left:1536.00px;top:562.00px;width:258.00px;height:8.00px;background:#a3bdf5;"></div>
<div class="b" style="left:1536.00px;top:556.00px;width:3.00px;height:20.00px;background:#a3bdf5;"></div>
<div class="b" style="left:1791.00px;top:556.00px;width:3.00px;height:20.00px;background:#a3bdf5;"></div>
<div class="b" style="left:1727.00px;top:556.00px;width:6.00px;height:20.00px;background:#cbd8f5;"></div>
<div class="b" style="left:1727.00px;top:562.00px;width:6.00px;height:8.00px;background:#a9c0f0;"></div>
<div class="b" style="left:1771.00px;top:556.00px;width:2.00px;height:20.00px;background:#cbd8f5;"></div>
<div class="b" style="left:1771.00px;top:562.00px;width:2.00px;height:8.00px;background:#a9c0f0;"></div>
<div class="t" style="top:557.65px;font:400 20.3px/20.3px 'Liberation Mono', monospace;color:#111;right:1526.50px;text-align:right;">6.89s</div>
<div class="b" style="left:1959.00px;top:346.00px;width:2.00px;height:1466.00px;background:#d9dae0;"></div>
<div class="b" style="left:1948.00px;top:1063.00px;width:24.00px;height:32.00px;background:#cfd6e1;border-radius:8px;"></div>
<div class="b" style="left:1955.70px;top:1071.90px;width:3.20px;height:3.20px;background:#111;border-radius:50%;"></div>
<div class="b" style="left:1955.70px;top:1077.40px;width:3.20px;height:3.20px;background:#111;border-radius:50%;"></div>
<div class="b" style="left:1955.70px;top:1082.80px;width:3.20px;height:3.20px;background:#111;border-radius:50%;"></div>
<div class="b" style="left:1961.10px;top:1071.90px;width:3.20px;height:3.20px;background:#111;border-radius:50%;"></div>
<div class="b" style="left:1961.10px;top:1077.40px;width:3.20px;height:3.20px;background:#111;border-radius:50%;"></div>
<div class="b" style="left:1961.10px;top:1082.80px;width:3.20px;height:3.20px;background:#111;border-radius:50%;"></div>
<div class="b" style="left:1973.00px;top:346.00px;width:1451.00px;height:1466.00px;background:#fff;border:2px solid #d9dae0;border-radius:16px;"></div>
<div class="t" style="top:370.36px;font:400 24px/24px 'Liberation Mono', monospace;color:#6b7078;left:1990.50px;">message</div>
<div class="t" style="top:404.73px;font:400 32.8px/32.8px 'Liberation Sans', sans-serif;color:#0d0d0d;left:1990.00px;">transform_recipe: vegetarian_recipe</div>
<svg class="b" style="left:3266px;top:372px;" width="36" height="36" viewBox="0 0 36 36" fill="none"><rect x="5.4" y="5.4" width="25.4" height="25.5" rx="3.4" stroke="#000" stroke-width="2.3"/><path d="M5.4 13.5 H30.8" stroke="#000" stroke-width="2.3"/><path d="M14 20.4 L18.1 24.4 L22.3 20.4" stroke="#000" stroke-width="2.3" stroke-linecap="round" stroke-linejoin="round"/></svg>
<svg class="b" style="left:3320.2px;top:374px;" width="33" height="33" viewBox="0 0 33 33" fill="none"><g transform="scale(1.35)"><path d="M10 13a5 5 0 0 0 7.54.54l3-3a5 5 0 0 0-7.07-7.07l-1.72 1.71" stroke="#000" stroke-width="1.8" stroke-linecap="round" stroke-linejoin="round"/><path d="M14 11a5 5 0 0 0-7.54-.54l-3 3a5 5 0 0 0 7.07 7.07l1.71-1.71" stroke="#000" stroke-width="1.8" stroke-linecap="round" stroke-linejoin="round"/></g></svg>
<svg class="b" style="left:3370px;top:372px;" width="36" height="36" viewBox="0 0 36 36" fill="none"><path d="M9.3 9.3 L26.4 26.5 M26.4 9.3 L9.3 26.5" stroke="#000" stroke-width="2.4" stroke-linecap="round"/></svg>
<div class="t" style="top:518.76px;font:400 24.5px/24.5px 'Liberation Sans', sans-serif;color:#26292e;left:2006.50px;">Eval</div>
<div class="t" style="top:518.08px;font:400 25.3px/25.3px 'Liberation Sans', sans-serif;color:#26292e;left:2084.50px;">Details</div>
<div class="t" style="top:519.01px;font:400 24.2px/24.2px 'Liberation Sans', sans-serif;color:#26292e;left:2194.50px;">Raw Data</div>
<div class="b" style="left:1991.00px;top:553.00px;width:1399.00px;height:2.00px;background:#d9dae0;"></div>
<div class="b" style="left:1991.00px;top:551.50px;width:78.00px;height:3.00px;background:#4c5b7c;"></div>
<div style="position:absolute;left:0;top:0;width:3456px;height:1836px;clip-path:inset(0 0 42.25px 0);">
<div class="b" style="left:1991.00px;top:579.00px;width:1399.00px;height:1300.00px;border:2px solid #d9dae0;border-radius:12px;"></div>
<div class="b" style="left:1993.00px;top:652.00px;width:1395.00px;height:2.00px;background:#d9dae0;"></div>
<div class="b" style="left:1993.00px;top:726.50px;width:1395.00px;height:2.00px;background:#d9dae0;"></div>
<div class="b" style="left:1993.00px;top:918.50px;width:1395.00px;height:2.00px;background:#d9dae0;"></div>
<div class="b" style="left:1993.00px;top:1516.50px;width:1395.00px;height:2.00px;background:#d9dae0;"></div>
<div class="b" style="left:1993.00px;top:1590.75px;width:1395.00px;height:2.00px;background:#d9dae0;"></div>
<div class="b" style="left:1993.00px;top:1736.50px;width:1395.00px;height:2.00px;background:#d9dae0;"></div>
<div class="t" style="top:602.29px;font:700 28.3px/28.3px 'Liberation Sans', sans-serif;color:#161616;left:2008.50px;">Case name</div>
<div class="t" style="top:677.29px;font:700 28.3px/28.3px 'Liberation Sans', sans-serif;color:#161616;left:2008.50px;">Task</div>
<div class="t" style="top:751.79px;font:700 28.3px/28.3px 'Liberation Sans', sans-serif;color:#161616;left:2008.50px;">Input</div>
<div class="t" style="top:943.04px;font:700 28.3px/28.3px 'Liberation Sans', sans-serif;color:#161616;left:2008.50px;">Output</div>
<div class="t" style="top:1541.04px;font:700 28.3px/28.3px 'Liberation Sans', sans-serif;color:#161616;left:2008.50px;">Labels</div>
<div class="t" style="top:1614.79px;font:700 28.3px/28.3px 'Liberation Sans', sans-serif;color:#161616;left:2008.50px;">Metrics</div>
<div class="t" style="top:1760.54px;font:700 28.3px/28.3px 'Liberation Sans', sans-serif;color:#161616;left:2008.50px;">Assertions</div>
<div class="t" style="top:601.78px;font:400 28.9px/28.9px 'Liberation Sans', sans-serif;color:#111;left:2202.00px;">vegetarian_recipe</div>
<div class="t" style="top:676.44px;font:400 29.3px/29.3px 'Liberation Sans', sans-serif;color:#111;left:2202.00px;">transform_recipe</div>
<svg class="b" style="left:2205px;top:757px;" width="16" height="12" viewBox="0 0 16 12" fill="none"><path d="M2.5 3 L7.6 8.2 L12.7 3" stroke="#101820" stroke-width="2.3" stroke-linecap="round" stroke-linejoin="round"/></svg>
<div class="t" style="top:752.11px;font:400 24px/24px 'Liberation Mono', monospace;color:#2f6680;left:2226.50px;">{</div>
<div class="t" style="top:752.11px;font:italic 400 24px/24px 'Liberation Mono', monospace;color:#b5b5b5;left:2255.00px;">2 items</div>
<div class="b" style="left:2237.00px;top:778.75px;width:2.00px;height:91.25px;background:#e3e3e3;"></div>
<div class="t" style="top:792.11px;font:400 24px/24px 'Liberation Mono', monospace;color:#161616;left:2271.00px;">&quot;dish_name&quot;: </div>
<div class="t" style="top:792.11px;font:400 24px/24px 'Liberation Mono', monospace;color:#a1261c;left:2461.70px;">&quot;Spaghetti Bolognese&quot;</div>
<div class="t" style="top:792.11px;font:400 24px/24px 'Liberation Mono', monospace;color:#161616;left:2764.10px;">,</div>
<div class="t" style="top:836.61px;font:400 24px/24px 'Liberation Mono', monospace;color:#161616;left:2271.00px;">&quot;dietary_restriction&quot;: </div>
<div class="t" style="top:836.61px;font:400 24px/24px 'Liberation Mono', monospace;color:#a1261c;left:2605.70px;">&quot;vegetarian&quot;</div>
<div class="t" style="top:836.61px;font:400 24px/24px 'Liberation Mono', monospace;color:#161616;left:2778.50px;">,</div>
<div class="t" style="top:875.61px;font:400 24px/24px 'Liberation Mono', monospace;color:#2f6680;left:2234.00px;">}</div>
<svg class="b" style="left:2205px;top:950px;" width="16" height="12" viewBox="0 0 16 12" fill="none"><path d="M2.5 3 L7.6 8.2 L12.7 3" stroke="#101820" stroke-width="2.3" stroke-linecap="round" stroke-linejoin="round"/></svg>
<div class="t" style="top:943.11px;font:400 24px/24px 'Liberation Mono', monospace;color:#2f6680;left:2226.50px;">{</div>
<div class="t" style="top:943.11px;font:italic 400 24px/24px 'Liberation Mono', monospace;color:#b5b5b5;left:2255.00px;">2 items</div>
<div class="b" style="left:2237.00px;top:970.00px;width:2.00px;height:497.70px;background:#e3e3e3;"></div>
<svg class="b" style="left:2253px;top:980.5px;" width="12" height="16" viewBox="0 0 12 16" fill="none"><path d="M3 2.5 L8.2 7.6 L3 12.7" stroke="#101820" stroke-width="2.3" stroke-linecap="round" stroke-linejoin="round"/></svg>
<div class="t" style="top:977.11px;font:400 24px/24px 'Liberation Mono', monospace;color:#161616;left:2271.00px;">&quot;ingredients&quot;: </div>
<div class="t" style="top:977.11px;font:400 24px/24px 'Liberation Mono', monospace;color:#2f6680;left:2490.50px;">[</div>
<div class="t" style="top:977.11px;font:400 24px/24px 'Liberation Mono', monospace;color:#c4561c;left:2504.90px;">...</div>
<div class="t" style="top:977.11px;font:400 24px/24px 'Liberation Mono', monospace;color:#2f6680;left:2548.10px;">]</div>
<div class="t" style="top:977.11px;font:italic 400 24px/24px 'Liberation Mono', monospace;color:#b5b5b5;left:2576.90px;">12 items</div>
<svg class="b" style="left:2250.5px;top:1016px;" width="16" height="12" viewBox="0 0 16 12" fill="none"><path d="M2.5 3 L7.6 8.2 L12.7 3" stroke="#101820" stroke-width="2.3" stroke-linecap="round" stroke-linejoin="round"/></svg>
<div class="t" style="top:1011.61px;font:400 24px/24px 'Liberation Mono', monospace;color:#161616;left:2271.00px;">&quot;steps&quot;: </div>
<div class="t" style="top:1011.61px;font:400 24px/24px 'Liberation Mono', monospace;color:#2f6680;left:2403.10px;">[</div>
<div class="t" style="top:1011.61px;font:italic 400 24px/24px 'Liberation Mono', monospace;color:#b5b5b5;left:2431.90px;">5 items</div>
<div class="b" style="left:2281.00px;top:1038.00px;width:2.00px;height:396.00px;background:#e3e3e3;"></div>
<div class="t" style="top:1050.36px;font:400 24px/24px 'Liberation Mono', monospace;color:#3b84c9;left:2313.50px;">0</div>
<div class="t" style="top:1050.36px;font:400 24px/24px 'Liberation Mono', monospace;color:#161616;left:2327.90px;">:</div>
<div class="t" style="top:1050.36px;font:400 24px/24px 'Liberation Mono', monospace;color:#a1261c;left:2362.50px;">&quot;Cook the spaghetti according to package instructions until al dente.</div>
<div class="t" style="top:1084.56px;font:400 24px/24px 'Liberation Mono', monospace;color:#a1261c;left:2362.50px;">Drain and set aside.&quot;</div>
<div class="t" style="top:1084.86px;font:400 24px/24px 'Liberation Mono', monospace;color:#161616;left:3359.00px;">,</div>
<div class="t" style="top:1129.61px;font:400 24px/24px 'Liberation Mono', monospace;color:#3b84c9;left:2313.50px;">1</div>
<div class="t" style="top:1129.61px;font:400 24px/24px 'Liberation Mono', monospace;color:#161616;left:2327.90px;">:</div>
<div class="t" style="top:1129.61px;font:400 24px/24px 'Liberation Mono', monospace;color:#a1261c;left:2362.50px;">&quot;In a large pan, heat the olive oil over medium heat. Add the onion a</div>
<div class="t" style="top:1163.81px;font:400 24px/24px 'Liberation Mono', monospace;color:#a1261c;left:2362.50px;">nd garlic, and sauté until the o...&quot;</div>
<div class="t" style="top:1164.11px;font:400 24px/24px 'Liberation Mono', monospace;color:#161616;left:3359.00px;">,</div>
<div class="t" style="top:1208.86px;font:400 24px/24px 'Liberation Mono', monospace;color:#3b84c9;left:2313.50px;">2</div>
<div class="t" style="top:1208.86px;font:400 24px/24px 'Liberation Mono', monospace;color:#161616;left:2327.90px;">:</div>
<div class="t" style="top:1208.86px;font:400 24px/24px 'Liberation Mono', monospace;color:#a1261c;left:2362.50px;">&quot;Add the diced carrot and celery to the pan. Continue to cook for abo</div>
<div class="t" style="top:1243.06px;font:400 24px/24px 'Liberation Mono', monospace;color:#a1261c;left:2362.50px;">ut 5 minutes, until the vegetabl...&quot;</div>
<div class="t" style="top:1243.36px;font:400 24px/24px 'Liberation Mono', monospace;color:#161616;left:3359.00px;">,</div>
<div class="t" style="top:1288.11px;font:400 24px/24px 'Liberation Mono', monospace;color:#3b84c9;left:2313.50px;">3</div>
<div class="t" style="top:1288.11px;font:400 24px/24px 'Liberation Mono', monospace;color:#161616;left:2327.90px;">:</div>
<div class="t" style="top:1288.11px;font:400 24px/24px 'Liberation Mono', monospace;color:#a1261c;left:2362.50px;">&quot;Stir in the diced tomatoes and tomato paste. Add the basil, oregano,</div>
<div class="t" style="top:1322.31px;font:400 24px/24px 'Liberation Mono', monospace;color:#a1261c;left:2362.50px;">salt, and pepper. Simmer the sa...&quot;</div>
<div class="t" style="top:1322.61px;font:400 24px/24px 'Liberation Mono', monospace;color:#161616;left:3359.00px;">,</div>
<div class="t" style="top:1367.36px;font:400 24px/24px 'Liberation Mono', monospace;color:#3b84c9;left:2313.50px;">4</div>
<div class="t" style="top:1367.36px;font:400 24px/24px 'Liberation Mono', monospace;color:#161616;left:2327.90px;">:</div>
<div class="t" style="top:1367.36px;font:400 24px/24px 'Liberation Mono', monospace;color:#a1261c;left:2362.50px;">&quot;Serve the sauce over the cooked spaghetti. Sprinkle with grated Parm</div>
<div class="t" style="top:1401.56px;font:400 24px/24px 'Liberation Mono', monospace;color:#a1261c;left:2362.50px;">esan cheese if desired.&quot;</div>
<div class="t" style="top:1401.86px;font:400 24px/24px 'Liberation Mono', monospace;color:#161616;left:3359.00px;">,</div>
<div class="t" style="top:1439.61px;font:400 24px/24px 'Liberation Mono', monospace;color:#2f6680;left:2276.50px;">]</div>
<div class="t" style="top:1473.61px;font:400 24px/24px 'Liberation Mono', monospace;color:#2f6680;left:2234.00px;">}</div>
<div class="t" style="top:1611.06px;font:400 26.8px/26.8px 'Liberation Sans', sans-serif;color:#6b7078;right:1080.00px;text-align:right;">input_tokens:</div>
<div class="t" style="top:1615.36px;font:400 24px/24px 'Liberation Mono', monospace;color:#111;right:895.00px;text-align:right;">208</div>
<div class="t" style="top:1651.06px;font:400 26.8px/26.8px 'Liberation Sans', sans-serif;color:#6b7078;right:1080.00px;text-align:right;">output_tokens:</div>
<div class="t" style="top:1655.36px;font:400 24px/24px 'Liberation Mono', monospace;color:#111;right:895.00px;text-align:right;">424</div>
<div class="t" style="top:1691.06px;font:400 26.8px/26.8px 'Liberation Sans', sans-serif;color:#6b7078;right:1080.00px;text-align:right;">requests:</div>
<div class="t" style="top:1695.36px;font:400 24px/24px 'Liberation Mono', monospace;color:#111;right:895.00px;text-align:right;">1</div>
<svg class="b" style="left:2198px;top:1752px;" width="160" height="48" viewBox="0 0 160 48" fill="none"><circle cx="24.9" cy="24.5" r="20.8" stroke="#d5483a" stroke-width="2.2"/><path d="M18.7 18.3 L31.1 30.7 M31.1 18.3 L18.7 30.7" stroke="#d5483a" stroke-width="2.6" stroke-linecap="round"/><circle cx="76.9" cy="24.5" r="20.8" stroke="#44ab72" stroke-width="2.2"/><path d="M68.9 25.5 L74.3 30.5 L85 20" stroke="#44ab72" stroke-width="2.6" stroke-linecap="round" stroke-linejoin="round"/><circle cx="128.9" cy="24.5" r="20.8" stroke="#44ab72" stroke-width="2.2"/><path d="M120.9 25.5 L126.3 30.5 L137 20" stroke="#44ab72" stroke-width="2.6" stroke-linecap="round" stroke-linejoin="round"/></svg>
</div>
</body></html>
